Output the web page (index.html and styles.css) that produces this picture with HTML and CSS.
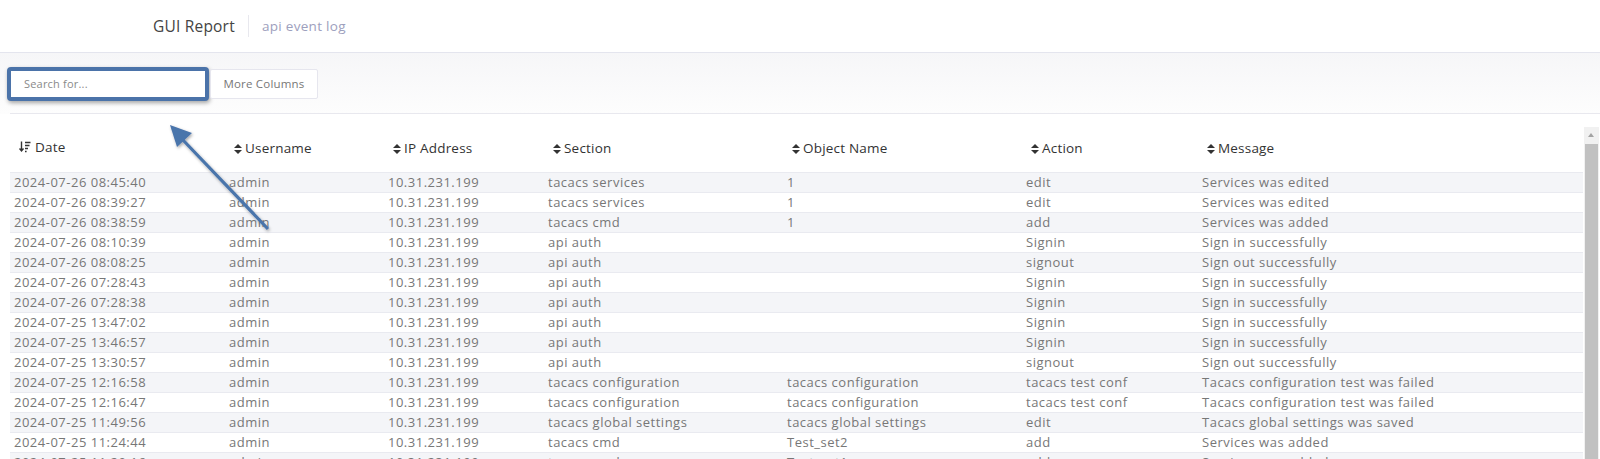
FILE: index.html
```html
<!DOCTYPE html>
<html lang="en">
  <head>
    <meta charset="UTF-8" />
    <meta name="viewport" content="width=device-width, initial-scale=1.0" />
    <title>GUI Report - api event log</title>
    <link rel="stylesheet" href="styles.css">
  </head>
  <body>
    <header class="top-bar">
      <div class="page-title">GUI Report</div>
      <div class="page-sub">api event log</div>
    </header>

    <div class="toolbar">
      <div class="search-wrap">
        <input class="search" type="text" placeholder="Search for..." />
      </div>
      <button class="more-btn">More Columns</button>
    </div>

    <div class="report">
      <div class="table-wrap">
        <table class="log-table">
          <thead>
            <tr>
              <th class="col-date"><span class="sort-desc">
                <svg width="12" height="12" viewBox="0 0 12 12"><path d="M2.5 0.5v9M0.5 7.5l2 2.5 2-2.5" stroke="#333" stroke-width="1.4" fill="none"/><path d="M6 1.5h5.5M6 4.5h4.5M6 7.5h3M6 10.5h1.6" stroke="#333" stroke-width="1.4"/></svg>
              </span>Date</th>
              <th class="col-user"><span class="sort"></span>Username</th>
              <th class="col-ip"><span class="sort"></span>IP Address</th>
              <th class="col-section"><span class="sort"></span>Section</th>
              <th class="col-object"><span class="sort"></span>Object Name</th>
              <th class="col-action"><span class="sort"></span>Action</th>
              <th class="col-msg"><span class="sort"></span>Message</th>
            </tr>
          </thead>
          <tbody id="rows"></tbody>
        </table>
      </div>
      <div class="scrollbar">
        <div class="scroll-up"></div>
        <div class="scroll-thumb"></div>
      </div>
    </div>

    <!-- annotation arrow pointing at the search box -->
    <svg class="callout" width="300" height="240" viewBox="0 0 300 240">
      <defs>
        <filter id="shade" x="-20%" y="-20%" width="140%" height="140%">
          <feDropShadow dx="1" dy="1.5" stdDeviation="1.5" flood-color="#000" flood-opacity="0.35"/>
        </filter>
      </defs>
      <g filter="url(#shade)">
        <path d="M268 229 L182 139" stroke="#4a74ab" stroke-width="3.2" fill="none"/>
        <path d="M170 125 L192 133 L177 147 Z" fill="#4a74ab"/>
      </g>
    </svg>

    <script>
      const rows = [
        ["2024-07-26 08:45:40", "admin", "10.31.231.199", "tacacs services", "1", "edit", "Services was edited"],
        ["2024-07-26 08:39:27", "admin", "10.31.231.199", "tacacs services", "1", "edit", "Services was edited"],
        ["2024-07-26 08:38:59", "admin", "10.31.231.199", "tacacs cmd", "1", "add", "Services was added"],
        ["2024-07-26 08:10:39", "admin", "10.31.231.199", "api auth", "", "Signin", "Sign in successfully"],
        ["2024-07-26 08:08:25", "admin", "10.31.231.199", "api auth", "", "signout", "Sign out successfully"],
        ["2024-07-26 07:28:43", "admin", "10.31.231.199", "api auth", "", "Signin", "Sign in successfully"],
        ["2024-07-26 07:28:38", "admin", "10.31.231.199", "api auth", "", "Signin", "Sign in successfully"],
        ["2024-07-25 13:47:02", "admin", "10.31.231.199", "api auth", "", "Signin", "Sign in successfully"],
        ["2024-07-25 13:46:57", "admin", "10.31.231.199", "api auth", "", "Signin", "Sign in successfully"],
        ["2024-07-25 13:30:57", "admin", "10.31.231.199", "api auth", "", "signout", "Sign out successfully"],
        ["2024-07-25 12:16:58", "admin", "10.31.231.199", "tacacs configuration", "tacacs configuration", "tacacs test conf", "Tacacs configuration test was failed"],
        ["2024-07-25 12:16:47", "admin", "10.31.231.199", "tacacs configuration", "tacacs configuration", "tacacs test conf", "Tacacs configuration test was failed"],
        ["2024-07-25 11:49:56", "admin", "10.31.231.199", "tacacs global settings", "tacacs global settings", "edit", "Tacacs global settings was saved"],
        ["2024-07-25 11:24:44", "admin", "10.31.231.199", "tacacs cmd", "Test_set2", "add", "Services was added"],
        ["2024-07-25 11:20:16", "admin", "10.31.231.199", "tacacs cmd", "Test_set1", "add", "Services was added"]
      ];

      const tbody = document.getElementById("rows");
      rows.forEach(function (r) {
        const tr = document.createElement("tr");
        r.forEach(function (v) {
          const td = document.createElement("td");
          td.textContent = v;
          tr.appendChild(td);
        });
        tbody.appendChild(tr);
      });
    </script>
  </body>
</html>
```

FILE: styles.css
```css
* {
  box-sizing: border-box;
}

html,
body {
  height: 100%;
  overflow: hidden;
}

body {
  margin: 0;
  font-family: "Open Sans", "Noto Sans", sans-serif;
  background-color: #fff;
  color: #333;
  position: relative;
  display: flex;
  flex-direction: column;
}

.top-bar {
  flex: none;
  height: 53px;
  display: flex;
  align-items: center;
  padding-left: 153px;
  border-bottom: 1px solid #e4e5ee;
}

.page-title {
  font-size: 15.5px;
  font-weight: 500;
  color: #444;
  padding-right: 13px;
  border-right: 1px solid #e8e8ee;
  line-height: 22px;
  letter-spacing: 0.2px;
}

.page-sub {
  font-size: 13.5px;
  color: #9da0bd;
  padding-left: 13px;
  line-height: 22px;
  letter-spacing: 0.3px;
}

.toolbar {
  flex: none;
  height: 61px;
  display: flex;
  align-items: center;
  padding-left: 7px;
  background: linear-gradient(#f6f6f8, #fdfdfd);
  position: relative;
}

.toolbar::after {
  content: "";
  position: absolute;
  left: 10px;
  right: 0;
  bottom: 0;
  border-bottom: 1px solid #e8e8ee;
}

.search-wrap {
  border: 4px solid #4b73a9;
  border-radius: 4px;
  box-shadow: 1px 2px 4px rgba(0, 0, 0, 0.35);
  background: #fff;
}

.search {
  display: block;
  width: 194px;
  height: 26px;
  border: 0;
  outline: none;
  padding: 0 13px;
  font-family: inherit;
  font-size: 11px;
  color: #555;
  letter-spacing: 0.2px;
}

.search::placeholder {
  color: #8a8a8a;
}

.more-btn {
  height: 30px;
  width: 108px;
  margin-left: 1px;
  border: 1px solid #e6e6ee;
  background: #fff;
  font-family: inherit;
  font-size: 11.5px;
  color: #777;
  letter-spacing: 0.2px;
  border-radius: 2px;
}

.report {
  flex: 1;
  min-height: 0;
  overflow: hidden;
  display: flex;
  align-items: stretch;
  padding: 13px 0 0 10px;
}

.table-wrap {
  flex: none;
  width: 1574px;
}

.log-table {
  width: 1573px;
  border-collapse: collapse;
  table-layout: fixed;
}

.log-table th {
  text-align: left;
  font-size: 13.5px;
  font-weight: 500;
  color: #333;
  height: 45px;
  padding: 0 0 3px 9px;
  white-space: nowrap;
  letter-spacing: 0.2px;
}

.log-table th.col-date {
  padding-left: 9px;
  width: 215px;
}

.col-user { width: 159px; }
.col-ip { width: 160px; }
.col-section { width: 239px; }
.col-object { width: 239px; }
.col-action { width: 176px; }

.sort {
  display: inline-block;
  position: relative;
  width: 8px;
  height: 10px;
  margin-right: 3px;
  vertical-align: -1px;
}

.sort::before,
.sort::after {
  content: "";
  position: absolute;
  left: 0;
  border-left: 4px solid transparent;
  border-right: 4px solid transparent;
}

.sort::before {
  top: 0;
  border-bottom: 4px solid #333;
}

.sort::after {
  bottom: 0;
  border-top: 4px solid #333;
}

.sort-desc {
  display: inline-block;
  margin-right: 4px;
  vertical-align: -1px;
}

.log-table tbody tr {
  height: 20px;
}

.log-table td {
  padding: 0 0 0 4px;
  font-size: 13px;
  color: #777;
  border-top: 1px solid #e9eaf0;
  white-space: nowrap;
  line-height: 18px;
  letter-spacing: 0.5px;
}

.log-table tbody tr:nth-child(odd) {
  background-color: #f4f5f8;
}

.scrollbar {
  flex: none;
  width: 15px;
  background: #f1f1f1;
  display: flex;
  flex-direction: column;
}

.scroll-up {
  height: 17px;
  position: relative;
}

.scroll-up::before {
  content: "";
  position: absolute;
  left: 4px;
  top: 6px;
  border-left: 3.5px solid transparent;
  border-right: 3.5px solid transparent;
  border-bottom: 4px solid #a3a3a3;
}

.scroll-thumb {
  flex: 1;
  margin: 0 1px;
  background: #c1c1c1;
}

.callout {
  position: absolute;
  left: 0;
  top: 0;
  pointer-events: none;
}
```
